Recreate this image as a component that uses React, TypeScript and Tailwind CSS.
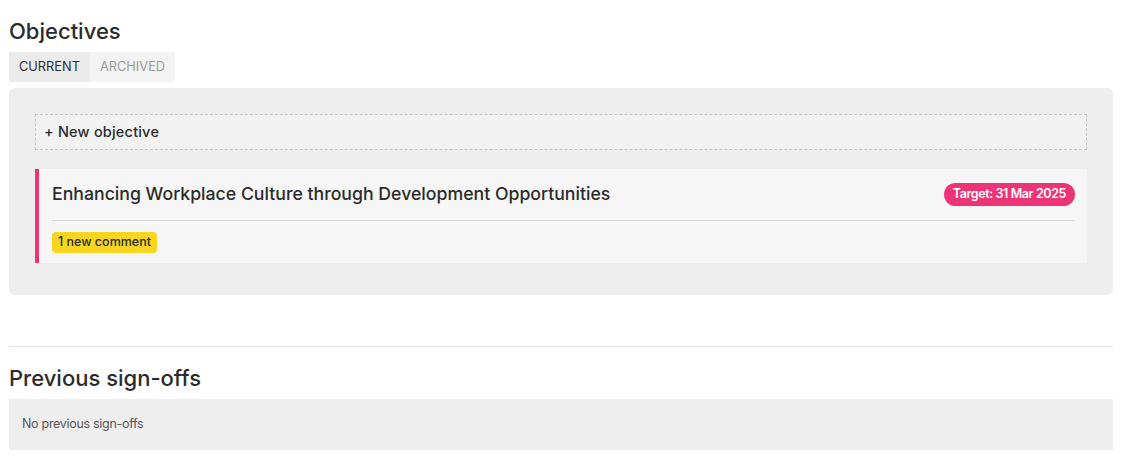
export default function App() {
  return (
    <div className="min-h-screen bg-white px-[9px] font-['Inter',sans-serif] text-[#2b2b2b]">
      <h2 className="pt-[16px] text-[22px] font-medium leading-[30px]">Objectives</h2>
      <div className="mt-[6px] flex h-[30px] text-[12.8px] uppercase">
        <div className="flex items-center bg-[#ebebeb] px-[10px] text-[#2b2b2b]">Current</div>
        <div className="flex items-center bg-[#f3f3f3] px-[10px] text-[#9a9a9a]">Archived</div>
      </div>
      <div className="mt-[6px] rounded-md bg-[#eeeeee] px-[26px] pt-[26px] pb-[32px]">
        <div className="flex h-[36px] items-center border border-dashed border-[#c4c4c4] bg-[#f2f2f2] px-[8px] text-[14.5px] font-medium tracking-[0.2px]">
          + New objective
        </div>
        <div className="mt-[19px] flex border-l-4 border-[#ec3476] bg-[#f6f6f6] pl-[13px] pr-[12px]">
          <div className="flex-1">
            <div className="flex h-[51px] items-center justify-between">
              <span className="text-[17.7px] font-medium">
                Enhancing Workplace Culture through Development Opportunities
              </span>
              <span className="flex h-[23px] items-center rounded-full bg-[#ec3476] px-[9px] text-[12.5px] font-semibold tracking-[-0.4px] text-white">
                Target: 31 Mar 2025
              </span>
            </div>
            <div className="border-t border-[#dcdcdc]" />
            <div className="flex pt-[11px] pb-[10px]">
              <span className="flex h-[21px] items-center rounded-[4px] bg-[#f7d520] px-[6px] text-[12.5px] font-medium leading-none">
                1 new comment
              </span>
            </div>
          </div>
        </div>
      </div>
      <div className="mt-[51px] border-t border-[#e5e5e5]" />
      <h2 className="mt-[16px] text-[22px] font-medium leading-[30px]">Previous sign-offs</h2>
      <div className="mt-[6px] flex h-[51px] items-center bg-[#eeeeee] px-[13px] text-[12.5px] tracking-[-0.3px] text-[#555555]">
        No previous sign-offs
      </div>
    </div>
  );
}
